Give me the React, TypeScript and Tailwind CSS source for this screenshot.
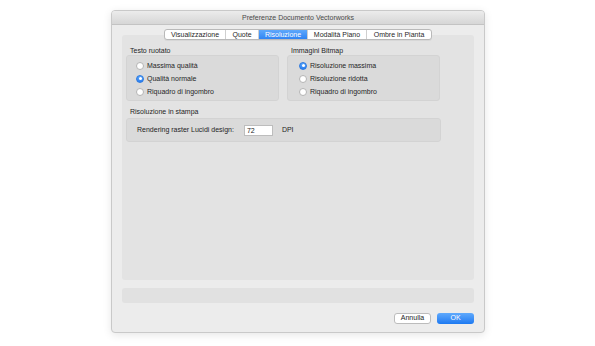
const tabs = [
  { label: "Visualizzazione", w: "w-[60px]" },
  { label: "Quote", w: "w-[33px]" },
  { label: "Risoluzione", w: "w-[49px]", active: true },
  { label: "Modalità Piano", w: "w-[59px]" },
  { label: "Ombre in Pianta", w: "w-[65px]" },
];

const Radio = ({ checked, label }: { checked?: boolean; label: string }) => (
  <div className="flex items-center h-[13px] gap-[3px]">
    {checked ? (
      <span className="w-[8px] h-[8px] rounded-full bg-gradient-to-b from-[#5aa6fb] to-[#2a7ff2] border border-[#2c79df] flex items-center justify-center">
        <span className="w-[3px] h-[3px] rounded-full bg-white" />
      </span>
    ) : (
      <span className="w-[8px] h-[8px] rounded-full bg-white border border-[#b4b4b4]" />
    )}
    <span className="text-[7px] leading-[8px] text-[#262626]">{label}</span>
  </div>
);

const Group = ({
  title,
  items,
  pad,
}: {
  title: string;
  items: { label: string; checked?: boolean }[];
  pad: string;
}) => (
  <div className="w-[153px]">
    <div className="pl-[4px] h-[8px] text-[7px] leading-[8px] text-[#1e1e1e]">{title}</div>
    <div className={`h-[46px] bg-[#dadada] rounded-[3px] border border-[#d3d3d3] pt-[3px] ${pad}`}>
      {items.map((it) => (
        <Radio key={it.label} label={it.label} checked={it.checked} />
      ))}
    </div>
  </div>
);

export default function App() {
  return (
    <div className="w-[595px] h-[346px] bg-white pt-[10px] pl-[111px] font-['Liberation_Sans',Arial,sans-serif]">
      <div className="w-[374px] h-[323px] bg-[#ececec] rounded-[4px] border border-[#c9c9c9] shadow-[0_2px_8px_rgba(0,0,0,0.10)] flex flex-col overflow-hidden">
        {/* title bar */}
        <div className="h-[14px] shrink-0 bg-gradient-to-b from-[#ececec] to-[#d6d6d6] border-b border-[#c3c3c3] text-center text-[7px] leading-[13px] text-[#4a4a4a]">
          Preferenze Documento Vectorworks
        </div>

        {/* tabs */}
        <div className="mt-[4px] flex justify-center relative z-10 h-[11px]">
          <div className="flex rounded-[3px] border border-[#b9b9b9] bg-white overflow-hidden shadow-[0_1px_0_rgba(0,0,0,0.05)]">
            {tabs.map((t, i) => (
              <div
                key={t.label}
                className={`${t.w} h-[9px] flex items-center justify-center text-[7px] leading-[9px] ${
                  t.active
                    ? "bg-gradient-to-b from-[#5ea8fb] to-[#2f84f4] text-white"
                    : "text-[#1f1f1f]"
                } ${i > 0 ? "border-l border-[#cfcfcf]" : ""}`}
              >
                {t.label}
              </div>
            ))}
          </div>
        </div>

        {/* main panel */}
        <div className="ml-[10px] w-[352px] h-[245px] -mt-[5px] bg-[#e3e3e3] rounded-[3px] pt-[12px] px-[4px]">
          <div className="flex gap-[8px]">
            <Group
              title="Testo ruotato"
              pad="pl-[9px]"
              items={[
                { label: "Massima qualità" },
                { label: "Qualità normale", checked: true },
                { label: "Riquadro di ingombro" },
              ]}
            />
            <Group
              title="Immagini Bitmap"
              pad="pl-[11px]"
              items={[
                { label: "Risoluzione massima", checked: true },
                { label: "Risoluzione ridotta" },
                { label: "Riquadro di ingombro" },
              ]}
            />
          </div>

          <div className="mt-[7px] pl-[4px] h-[10px] text-[7px] leading-[8px] text-[#1e1e1e]">
            Risoluzione in stampa
          </div>
          <div className="w-[315px] h-[24px] bg-[#dadada] rounded-[3px] border border-[#d3d3d3] flex items-center pl-[10px] text-[7px] text-[#1e1e1e]">
            <span>Rendering raster Lucidi design:</span>
            <div className="ml-[10px] w-[29px] h-[11px] bg-white border border-[#bdbdbd] pl-[2px] leading-[9px]">
              72
            </div>
            <span className="ml-[9px]">DPI</span>
          </div>
        </div>

        {/* bottom bar */}
        <div className="ml-[10px] w-[352px] h-[15px] mt-[8px] bg-[#e1e1e1] rounded-[3px]" />

        {/* buttons */}
        <div className="ml-[10px] w-[352px] mt-[10px] flex justify-end gap-[6px]">
          <div className="w-[37px] h-[11px] bg-white border border-[#bcbcbc] rounded-[3px] flex items-center justify-center text-[7px] text-[#222]">
            Annulla
          </div>
          <div className="w-[37px] h-[11px] bg-gradient-to-b from-[#5fa9fc] to-[#1b79f1] rounded-[3px] flex items-center justify-center text-[7px] text-white">
            OK
          </div>
        </div>
      </div>
    </div>
  );
}
